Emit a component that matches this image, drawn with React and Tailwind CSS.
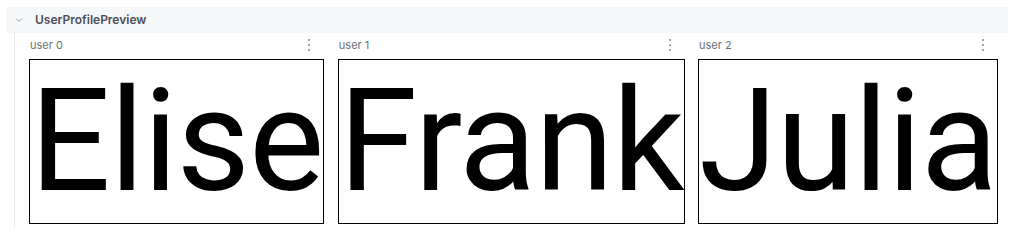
import React from 'react';

const users = ['Elise', 'Frank', 'Julia'];

const Kebab = () => (
  <div className="flex flex-col gap-[3px] items-center justify-center w-[4px]">
    <span className="block w-[2px] h-[2px] bg-[#a0a4ab]" />
    <span className="block w-[2px] h-[2px] bg-[#a0a4ab]" />
    <span className="block w-[2px] h-[2px] bg-[#a0a4ab]" />
  </div>
);

const PreviewCard = ({ index, name }) => (
  <div className="flex flex-col">
    <div className="flex items-center justify-between h-[26px] pl-[1px] pr-[13px] pb-[2px]">
      <span className="text-[11px] text-[#6b6f76] font-['Inter',sans-serif]">user {index}</span>
      <Kebab />
    </div>
    <div className="border border-black bg-white">
      <span className="block text-[142px] leading-[163px] tracking-[-1px] text-black font-['Roboto',sans-serif] whitespace-nowrap">
        {name}
      </span>
    </div>
  </div>
);

export default function App() {
  return (
    <div className="w-[1015px] h-[241px] bg-white pt-[7px] font-['Inter',sans-serif]">
      {/* Section header */}
      <div className="ml-[6px] mr-[7px] h-[26px] bg-[#f6f7f9] flex items-center">
        <svg width="10" height="10" viewBox="0 0 10 10" className="ml-[8px] mr-[11px]">
          <path d="M2 3.5 L5 6.5 L8 3.5" fill="none" stroke="#9aa0a8" strokeWidth="1" />
        </svg>
        <span className="text-[12px] font-semibold text-[#4b4f57]">UserProfilePreview</span>
      </div>

      {/* Previews */}
      <div className="ml-[14px] border-l border-[#e8e9ec] h-[195px] pl-[14px] flex gap-[13.5px]">
        {users.map((u, i) => (
          <PreviewCard key={u} index={i} name={u} />
        ))}
      </div>
    </div>
  );
}
